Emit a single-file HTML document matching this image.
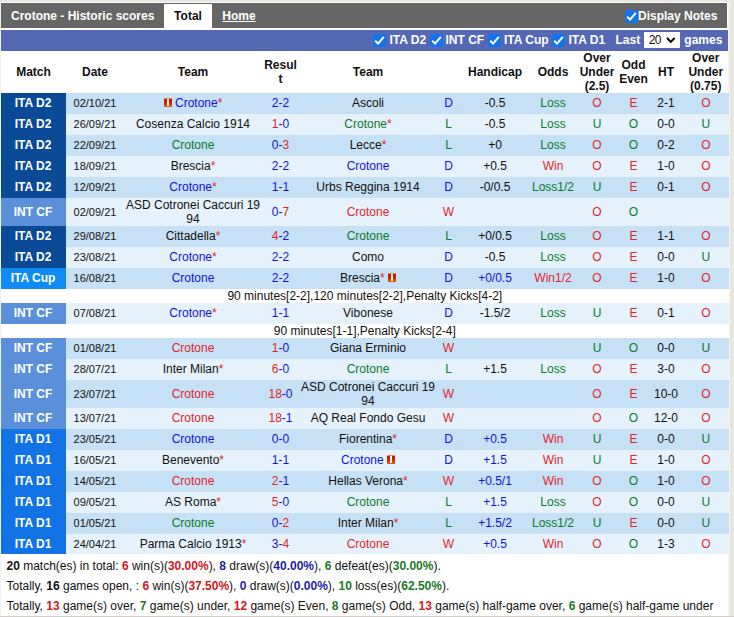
<!DOCTYPE html>
<html><head><meta charset="utf-8"><title>Crotone - Historic scores</title>
<style>
html,body{margin:0;padding:0;}
body{width:734px;height:617px;overflow:hidden;background:#e8e7df;font-family:"Liberation Sans",Arial,sans-serif;font-size:12px;color:#111;position:relative;}
#wrap{position:absolute;left:0;top:2px;width:728px;height:614px;background:#fff;border-left:1px solid #f0f0ee;box-sizing:border-box;}
#in{position:absolute;left:0px;top:-1px;}
#rt{z-index:-1;position:absolute;left:728px;top:2px;width:2px;height:614px;background:#f3f2ed;}
#btm{position:absolute;left:0;top:616px;width:734px;height:1px;background:#cfcec8;}
#bar{position:absolute;left:0;top:2px;width:726px;height:25px;background:#666;}
#bar .ttl{position:absolute;left:10px;top:1px;line-height:25px;color:#fff;font-weight:bold;font-size:12px;}
#bar .tab{position:absolute;left:163px;top:1px;width:48px;height:24px;background:#fff;color:#111;font-weight:bold;font-size:12px;line-height:25px;text-align:center;}
#bar .home{position:absolute;left:221.3px;top:1px;line-height:25px;color:#fff;font-weight:bold;font-size:12px;text-decoration:underline;}
#bar .dn{position:absolute;left:637px;top:1px;line-height:25px;color:#fff;font-weight:bold;font-size:12px;}
.cb{display:inline-block;width:13px;height:13px;background:#1373ea;border-radius:2px;vertical-align:-2px;position:relative;}
.cb svg{position:absolute;left:0;top:0;}
#flt{position:absolute;left:0;top:29px;width:727px;height:21px;background:#5468b4;color:#fff;font-weight:bold;font-size:12px;line-height:21px;}
#flt .ft{position:absolute;top:0;white-space:nowrap;}
#flt .cb{position:absolute;top:4px;}
.sel{position:absolute;left:642.7px;top:2px;width:36.6px;height:16.3px;background:#fff;color:#111;font-weight:normal;font-size:12px;line-height:16px;letter-spacing:-0.7px;}
.sel span{position:absolute;left:5px;top:0}
table{position:absolute;left:0;top:50px;width:727.6px;border-collapse:collapse;table-layout:fixed;}
td,th{padding:0;text-align:center;overflow:visible;}
th{font-weight:bold;font-size:12px;height:42px;line-height:14px;color:#111;}
tr.a td{background:#c6e0f5;}
tr.z td{background:#e5f2fb;}
tr.a td,tr.z td{height:19px;line-height:14px;padding-bottom:2px;}
tr.t2 td{height:28px;padding-bottom:0}
td.dt{font-size:11px;}
tr.last td{height:18px;padding-top:1px;padding-bottom:1px;}
tr.nt td{height:14px;line-height:14px;background:#fff;}
td.lg{color:#fff;font-weight:bold;font-size:12px;}
tr.a td.lg,tr.z td.lg{padding-right:1px;}
tr td.d2{background:#0a4a96;}
tr td.cf{background:#5b8fd9;}
tr td.cup{background:#0e8cf4;}
tr td.d1{background:#1273e6;}
.r{color:#e2242c;}.g{color:#0a7a2e;}.b{color:#1212d8;}.k{color:#111;}
.sc{font-size:12px;}
.cd{display:inline-block;width:8px;height:9px;background:linear-gradient(#f09a58 0,#e8703a 1px,#c41c00 1.5px,#cc2800 5px,#e86414 9px);position:relative;vertical-align:0px;}
.cd b{position:absolute;left:3px;top:1px;width:2px;height:7px;background:#fff4e4;}
#sum{position:absolute;left:5.5px;top:555px;line-height:20px;font-size:12px;white-space:nowrap;}
#sum b.r{color:#d01820}#sum b.g{color:#1a7a28}#sum b.b{color:#2222aa}
</style></head><body>
<div id="wrap"><div id="in">
<div id="bar"><span class="ttl">Crotone - Historic scores</span><span class="tab">Total</span><span class="home">Home</span><span class="cb" style="position:absolute;left:624px;top:7px"><svg width="13" height="13" viewBox="0 0 13 13"><path d="M2.2 6.8 L5.1 9.6 L10.8 2.8" fill="none" stroke="#fff" stroke-width="2"/></svg></span><span class="dn">Display Notes</span></div>
<div id="flt"><span class="cb" style="left:372px"><svg width="13" height="13" viewBox="0 0 13 13"><path d="M2.2 6.8 L5.1 9.6 L10.8 2.8" fill="none" stroke="#fff" stroke-width="2"/></svg></span><span class="ft" style="left:388.5px">ITA D2</span><span class="cb" style="left:428.5px"><svg width="13" height="13" viewBox="0 0 13 13"><path d="M2.2 6.8 L5.1 9.6 L10.8 2.8" fill="none" stroke="#fff" stroke-width="2"/></svg></span><span class="ft" style="left:444.5px">INT CF</span><span class="cb" style="left:487px"><svg width="13" height="13" viewBox="0 0 13 13"><path d="M2.2 6.8 L5.1 9.6 L10.8 2.8" fill="none" stroke="#fff" stroke-width="2"/></svg></span><span class="ft" style="left:503px">ITA Cup</span><span class="cb" style="left:551px"><svg width="13" height="13" viewBox="0 0 13 13"><path d="M2.2 6.8 L5.1 9.6 L10.8 2.8" fill="none" stroke="#fff" stroke-width="2"/></svg></span><span class="ft" style="left:567.5px">ITA D1</span><span class="ft" style="left:614.5px">Last</span><span class="sel"><span>20</span><svg width="10" height="7" viewBox="0 0 10 7" style="position:absolute;left:22.2px;top:5px"><path d="M1 1 L4.8 4.9 L8.6 1" fill="none" stroke="#000" stroke-width="2"/></svg></span><span class="ft" style="left:683.3px">games</span></div>
<table>
<colgroup><col style="width:65px"><col style="width:58px"><col style="width:138px"><col style="width:37px"><col style="width:138px"><col style="width:23px"><col style="width:70px"><col style="width:46px"><col style="width:42px"><col style="width:31px"><col style="width:34px"><col style="width:45.6px"></colgroup>
<tr><th>Match</th><th>Date</th><th>Team</th><th>Resul<br>t</th><th>Team</th><th></th><th>Handicap</th><th>Odds</th><th>Over<br>Under<br>(2.5)</th><th>Odd<br>Even</th><th>HT</th><th>Over<br>Under<br>(0.75)</th></tr>
<tr class="a"><td class="lg d2">ITA D2</td><td class="dt">02/10/21</td><td><i class="cd"><b></b></i> <span class="b">Crotone</span><span class="r">*</span></td><td class="sc"><span class="b">2</span><span class="b">-</span><span class="b">2</span></td><td><span class="k">Ascoli</span></td><td class="b">D</td><td class="k">-0.5</td><td class="g">Loss</td><td class="r">O</td><td class="r">E</td><td>2-1</td><td class="r">O</td></tr>
<tr class="z"><td class="lg d2">ITA D2</td><td class="dt">26/09/21</td><td><span class="k">Cosenza Calcio 1914</span></td><td class="sc"><span class="r">1</span><span class="b">-</span><span class="b">0</span></td><td><span class="g">Crotone</span><span class="r">*</span></td><td class="g">L</td><td class="k">-0.5</td><td class="g">Loss</td><td class="g">U</td><td class="g">O</td><td>0-0</td><td class="g">U</td></tr>
<tr class="a"><td class="lg d2">ITA D2</td><td class="dt">22/09/21</td><td><span class="g">Crotone</span></td><td class="sc"><span class="b">0</span><span class="b">-</span><span class="r">3</span></td><td><span class="k">Lecce</span><span class="r">*</span></td><td class="g">L</td><td class="k">+0</td><td class="g">Loss</td><td class="r">O</td><td class="g">O</td><td>0-2</td><td class="r">O</td></tr>
<tr class="z"><td class="lg d2">ITA D2</td><td class="dt">18/09/21</td><td><span class="k">Brescia</span><span class="r">*</span></td><td class="sc"><span class="b">2</span><span class="b">-</span><span class="b">2</span></td><td><span class="b">Crotone</span></td><td class="b">D</td><td class="k">+0.5</td><td class="r">Win</td><td class="r">O</td><td class="r">E</td><td>1-0</td><td class="r">O</td></tr>
<tr class="a"><td class="lg d2">ITA D2</td><td class="dt">12/09/21</td><td><span class="b">Crotone</span><span class="r">*</span></td><td class="sc"><span class="b">1</span><span class="b">-</span><span class="b">1</span></td><td><span class="k">Urbs Reggina 1914</span></td><td class="b">D</td><td class="k">-0/0.5</td><td class="g">Loss1/2</td><td class="g">U</td><td class="r">E</td><td>0-1</td><td class="r">O</td></tr>
<tr class="z t2"><td class="lg cf">INT CF</td><td class="dt">02/09/21</td><td><span class="k">ASD Cotronei Caccuri 19<br>94</span></td><td class="sc"><span class="b">0</span><span class="b">-</span><span class="r">7</span></td><td><span class="r">Crotone</span></td><td class="r">W</td><td class=""></td><td class="k"></td><td class="r">O</td><td class="g">O</td><td></td><td class="k"></td></tr>
<tr class="a"><td class="lg d2">ITA D2</td><td class="dt">29/08/21</td><td><span class="k">Cittadella</span><span class="r">*</span></td><td class="sc"><span class="r">4</span><span class="b">-</span><span class="b">2</span></td><td><span class="g">Crotone</span></td><td class="g">L</td><td class="k">+0/0.5</td><td class="g">Loss</td><td class="r">O</td><td class="r">E</td><td>1-1</td><td class="r">O</td></tr>
<tr class="z"><td class="lg d2">ITA D2</td><td class="dt">23/08/21</td><td><span class="b">Crotone</span><span class="r">*</span></td><td class="sc"><span class="b">2</span><span class="b">-</span><span class="b">2</span></td><td><span class="k">Como</span></td><td class="b">D</td><td class="k">-0.5</td><td class="g">Loss</td><td class="r">O</td><td class="r">E</td><td>0-0</td><td class="g">U</td></tr>
<tr class="a"><td class="lg cup">ITA Cup</td><td class="dt">16/08/21</td><td><span class="b">Crotone</span></td><td class="sc"><span class="b">2</span><span class="b">-</span><span class="b">2</span></td><td><span class="k">Brescia</span><span class="r">*</span> <i class="cd"><b></b></i></td><td class="b">D</td><td class="b">+0/0.5</td><td class="r">Win1/2</td><td class="r">O</td><td class="r">E</td><td>1-0</td><td class="r">O</td></tr>
<tr class="nt"><td colspan="12">90 minutes[2-2],120 minutes[2-2],Penalty Kicks[4-2]</td></tr>
<tr class="z"><td class="lg cf">INT CF</td><td class="dt">07/08/21</td><td><span class="b">Crotone</span><span class="r">*</span></td><td class="sc"><span class="b">1</span><span class="b">-</span><span class="b">1</span></td><td><span class="k">Vibonese</span></td><td class="b">D</td><td class="k">-1.5/2</td><td class="g">Loss</td><td class="g">U</td><td class="r">E</td><td>0-1</td><td class="r">O</td></tr>
<tr class="nt"><td colspan="12">90 minutes[1-1],Penalty Kicks[2-4]</td></tr>
<tr class="a"><td class="lg cf">INT CF</td><td class="dt">01/08/21</td><td><span class="r">Crotone</span></td><td class="sc"><span class="r">1</span><span class="b">-</span><span class="b">0</span></td><td><span class="k">Giana Erminio</span></td><td class="r">W</td><td class=""></td><td class="k"></td><td class="g">U</td><td class="g">O</td><td>0-0</td><td class="g">U</td></tr>
<tr class="z"><td class="lg cf">INT CF</td><td class="dt">28/07/21</td><td><span class="k">Inter Milan</span><span class="r">*</span></td><td class="sc"><span class="r">6</span><span class="b">-</span><span class="b">0</span></td><td><span class="g">Crotone</span></td><td class="g">L</td><td class="k">+1.5</td><td class="g">Loss</td><td class="r">O</td><td class="r">E</td><td>3-0</td><td class="r">O</td></tr>
<tr class="a t2"><td class="lg cf">INT CF</td><td class="dt">23/07/21</td><td><span class="r">Crotone</span></td><td class="sc"><span class="r">18</span><span class="b">-</span><span class="b">0</span></td><td><span class="k">ASD Cotronei Caccuri 19<br>94</span></td><td class="r">W</td><td class=""></td><td class="k"></td><td class="r">O</td><td class="r">E</td><td>10-0</td><td class="r">O</td></tr>
<tr class="z"><td class="lg cf">INT CF</td><td class="dt">13/07/21</td><td><span class="r">Crotone</span></td><td class="sc"><span class="r">18</span><span class="b">-</span><span class="b">1</span></td><td><span class="k">AQ Real Fondo Gesu</span></td><td class="r">W</td><td class=""></td><td class="k"></td><td class="r">O</td><td class="g">O</td><td>12-0</td><td class="r">O</td></tr>
<tr class="a"><td class="lg d1">ITA D1</td><td class="dt">23/05/21</td><td><span class="b">Crotone</span></td><td class="sc"><span class="b">0</span><span class="b">-</span><span class="b">0</span></td><td><span class="k">Fiorentina</span><span class="r">*</span></td><td class="b">D</td><td class="b">+0.5</td><td class="r">Win</td><td class="g">U</td><td class="r">E</td><td>0-0</td><td class="g">U</td></tr>
<tr class="z"><td class="lg d1">ITA D1</td><td class="dt">16/05/21</td><td><span class="k">Benevento</span><span class="r">*</span></td><td class="sc"><span class="b">1</span><span class="b">-</span><span class="b">1</span></td><td><span class="b">Crotone</span> <i class="cd"><b></b></i></td><td class="b">D</td><td class="b">+1.5</td><td class="r">Win</td><td class="g">U</td><td class="r">E</td><td>1-0</td><td class="r">O</td></tr>
<tr class="a"><td class="lg d1">ITA D1</td><td class="dt">14/05/21</td><td><span class="r">Crotone</span></td><td class="sc"><span class="r">2</span><span class="b">-</span><span class="b">1</span></td><td><span class="k">Hellas Verona</span><span class="r">*</span></td><td class="r">W</td><td class="b">+0.5/1</td><td class="r">Win</td><td class="r">O</td><td class="g">O</td><td>1-0</td><td class="r">O</td></tr>
<tr class="z"><td class="lg d1">ITA D1</td><td class="dt">09/05/21</td><td><span class="k">AS Roma</span><span class="r">*</span></td><td class="sc"><span class="r">5</span><span class="b">-</span><span class="b">0</span></td><td><span class="g">Crotone</span></td><td class="g">L</td><td class="b">+1.5</td><td class="g">Loss</td><td class="r">O</td><td class="g">O</td><td>0-0</td><td class="g">U</td></tr>
<tr class="a"><td class="lg d1">ITA D1</td><td class="dt">01/05/21</td><td><span class="g">Crotone</span></td><td class="sc"><span class="b">0</span><span class="b">-</span><span class="r">2</span></td><td><span class="k">Inter Milan</span><span class="r">*</span></td><td class="g">L</td><td class="b">+1.5/2</td><td class="g">Loss1/2</td><td class="g">U</td><td class="r">E</td><td>0-0</td><td class="g">U</td></tr>
<tr class="z last"><td class="lg d1">ITA D1</td><td class="dt">24/04/21</td><td><span class="k">Parma Calcio 1913</span><span class="r">*</span></td><td class="sc"><span class="b">3</span><span class="b">-</span><span class="r">4</span></td><td><span class="r">Crotone</span></td><td class="r">W</td><td class="b">+0.5</td><td class="r">Win</td><td class="r">O</td><td class="g">O</td><td>1-3</td><td class="r">O</td></tr>
</table>
<div id="sum"><b>20</b> match(es) in total: <b class="r">6</b> win(s)(<b class="r">30.00%</b>), <b class="b">8</b> draw(s)(<b class="b">40.00%</b>), <b class="g">6</b> defeat(es)(<b class="g">30.00%</b>).<br>Totally, <b>16</b> games open, : <b class="r">6</b> win(s)(<b class="r">37.50%</b>), <b class="b">0</b> draw(s)(<b class="b">0.00%</b>), <b class="g">10</b> loss(es)(<b class="g">62.50%</b>).<br>Totally, <b class="r">13</b> game(s) over, <b class="g">7</b> game(s) under, <b class="r">12</b> game(s) Even, <b class="g">8</b> game(s) Odd, <b class="r">13</b> game(s) half-game over, <b class="g">6</b> game(s) half-game under</div>
</div></div>
<div id="rt"></div><div id="btm"></div>
</body></html>
